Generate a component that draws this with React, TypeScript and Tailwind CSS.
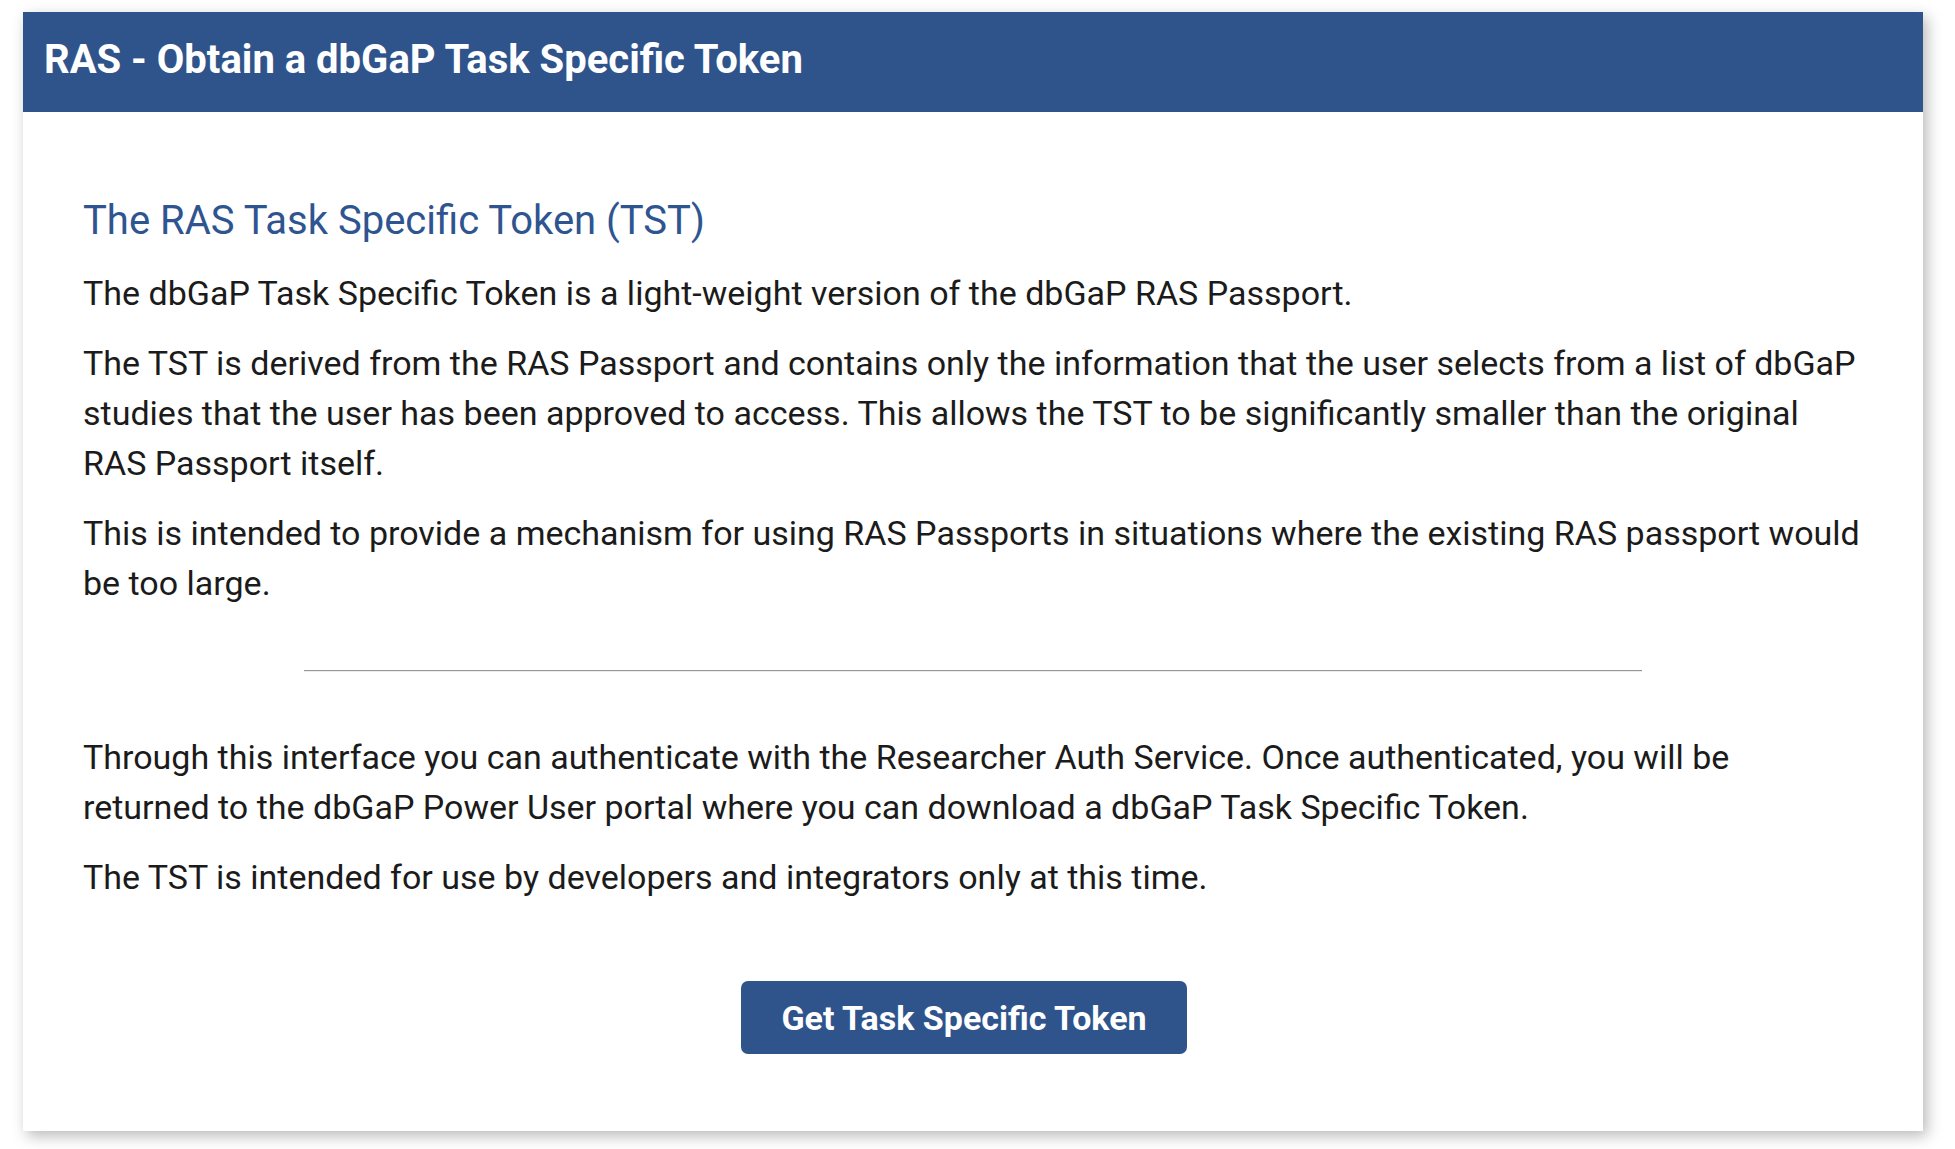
import React from 'react';

const paragraphs = [
  'The dbGaP Task Specific Token is a light-weight version of the dbGaP RAS Passport.',
  'The TST is derived from the RAS Passport and contains only the information that the user selects from a list of dbGaP studies that the user has been approved to access. This allows the TST to be significantly smaller than the original RAS Passport itself.',
  'This is intended to provide a mechanism for using RAS Passports in situations where the existing RAS passport would be too large.',
];

const App: React.FC = () => {
  return (
    <div className="min-h-screen bg-white font-['Roboto',sans-serif] pl-[23px] pt-[12px]">
      <div className="w-[1900px] h-[1119px] bg-white shadow-[4px_5px_14px_rgba(0,0,0,0.28)] flex flex-col">
        {/* header bar */}
        <div className="h-[100px] bg-[#2f548c] flex items-center px-[21px] pb-[4px]">
          <h1 className="text-white font-bold text-[40px] leading-none">
            RAS - Obtain a dbGaP Task Specific Token
          </h1>
        </div>

        <div className="px-[60px] pt-[86px] text-[#1b1b1b] text-[34px] leading-[50px]">
          <h2 className="text-[#2f5590] text-[40px] leading-[46px] mb-[24px]">
            The RAS Task Specific Token (TST)
          </h2>
          {paragraphs.map((p, i) => (
            <p key={i} className="mb-[20px]">{p}</p>
          ))}

          <div className="flex justify-center pt-[42px] pb-[60px]">
            <div className="w-[1338px] h-[2px] bg-[#979797] border-b border-[#ececec]"></div>
          </div>

          <p className="mb-[20px]">
            Through this interface you can authenticate with the Researcher Auth Service. Once authenticated, you will be returned to the dbGaP Power User portal where you can download a dbGaP Task Specific Token.
          </p>
          <p>The TST is intended for use by developers and integrators only at this time.</p>

          <div className="flex justify-center pt-[79px] pr-[18px]">
            <button className="w-[446px] h-[73px] rounded-[7px] bg-[#2f548c] text-white font-bold text-[34px]">
              Get Task Specific Token
            </button>
          </div>
        </div>
      </div>
    </div>
  );
};

export default App;
